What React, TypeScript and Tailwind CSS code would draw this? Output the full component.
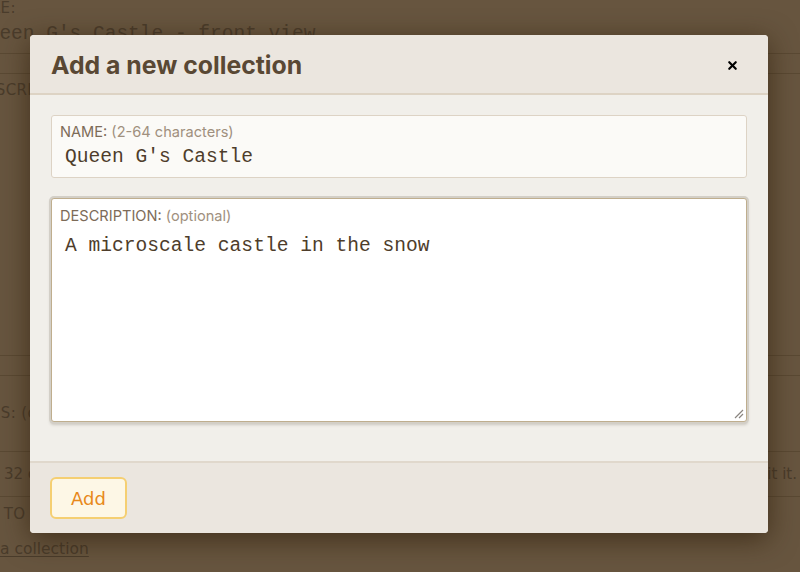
import { X } from 'lucide-react';

const sans = "font-['Inter','Liberation_Sans',sans-serif]";
const mono = "font-['Liberation_Mono','Courier_New',monospace]";
const deja = "font-['DejaVu_Sans','Verdana',sans-serif]";

function Backdrop() {
  return (
    <div className={`h-[572px] w-[800px] overflow-hidden bg-[#67553f] text-[#4a3c2b] ${deja}`}>
      <div className="ml-[-42px] flex flex-col">
        <div className="flex h-[16px] items-center pl-[10px] text-[15px] tracking-wide">TITLE:</div>
        <div className={`flex h-[37px] items-center pl-[18px] text-[19.5px] ${mono}`}>Queen G's Castle - front view</div>
        <div className="h-[21px] border-y border-[#5a4933]" />
        <div className="flex h-[32px] items-center pl-[16px] text-[15px] tracking-wide">DESCRIPTION:</div>
        <div className="h-[249px]" />
        <div className="h-[21px] border-y border-[#5a4933]" />
        <div className="flex h-[75px] items-center pl-[12px] text-[15px] tracking-wide">TAGS: (optional)</div>
        <div className="flex h-[45px] items-center justify-between border-t border-[#5a4933] pl-[46px] pr-[3px] text-[15px]">
          <span>32 characters</span>
          <span>to edit it.</span>
        </div>
        <div className="flex h-[36px] items-center border-t border-[#5a4933] pl-[6px] text-[15px] tracking-wide">ADD TO</div>
        <div className="flex h-[36px] items-center pl-[42px] text-[15.5px]">
          <span className="underline underline-offset-2">a collection</span>
        </div>
      </div>
    </div>
  );
}

function ResizeHandle() {
  return (
    <svg width="10" height="10" viewBox="0 0 10 10" className="absolute bottom-[2px] right-[2px]">
      <path d="M1 9 L9 1 M5 9 L9 5" stroke="#8a8580" strokeWidth="1.2" />
    </svg>
  );
}

export default function App() {
  return (
    <div className="relative h-[572px] w-[800px] overflow-hidden">
      <Backdrop />
      <div className="absolute left-[30px] top-[35px] flex h-[498px] w-[738px] flex-col overflow-hidden rounded-[4px] bg-[#f1efea] shadow-[0_6px_28px_rgba(45,28,8,0.65)]">
        <div className="flex h-[60px] items-center justify-between border-b-2 border-[#ddd3c4] bg-[#ebe6df] pl-[21px] pr-[29px] pt-[3px]">
          <h2 className={`text-[24.8px] font-bold text-[#594834] ${sans}`}>Add a new collection</h2>
          <X size={13} strokeWidth={4} className="text-black" />
        </div>
        <div className="flex flex-1 flex-col px-[21px] pt-[20px]">
          <div className="flex h-[63px] flex-col rounded-[3px] border border-[#ddd3c5] bg-[#fbfaf7] px-[8px] pt-[8px]">
            <div className={`text-[14.6px] leading-[17px] text-[#7d6b58] ${sans}`}>
              NAME: <span className="text-[#a0907e]">(2-64 characters)</span>
            </div>
            <div className={`mt-[4px] pl-[5px] text-[19.6px] leading-[24px] text-[#4e3d2b] ${mono}`}>Queen G's Castle</div>
          </div>
          <div className="relative mt-[20px] flex h-[224px] flex-col rounded-[3px] border border-[#bfae8e] bg-white px-[8px] pt-[9px] shadow-[0_0_0_2px_#d3cfc7,0_2px_3px_1px_#cdc9c1]">
            <div className={`text-[14.6px] leading-[17px] text-[#7d6b58] ${sans}`}>
              DESCRIPTION: <span className="text-[#a0907e]">(optional)</span>
            </div>
            <div className={`mt-[9px] pl-[5px] text-[19.6px] leading-[24px] text-[#4e3d2b] ${mono}`}>A microscale castle in the snow</div>
            <ResizeHandle />
          </div>
        </div>
        <div className="flex h-[72px] items-start border-t-2 border-[#e0d8cc] bg-[#ebe6df] pl-[20px] pt-[14px]">
          <button className={`flex h-[42px] w-[77px] items-center justify-center rounded-[6px] border-2 border-[#f5cf72] bg-[#fdf7e6] text-[18px] text-[#e8891a] ${deja}`}>
            Add
          </button>
        </div>
      </div>
    </div>
  );
}
